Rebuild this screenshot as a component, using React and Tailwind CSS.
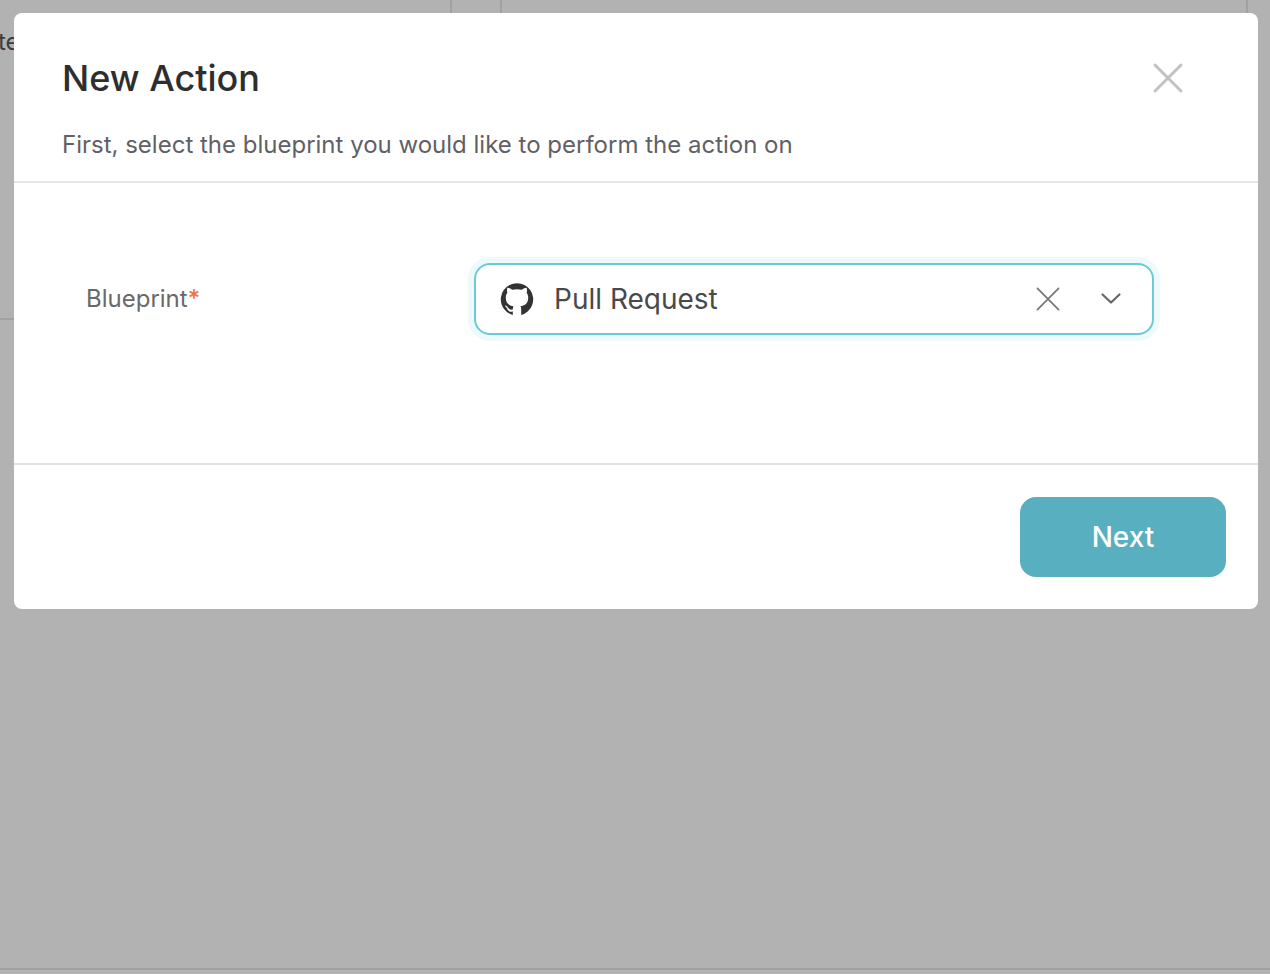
import { useState } from "react";

function GithubMark({ className }) {
  return (
    <svg viewBox="0 0 32 32" fill="currentColor" aria-hidden="true" className={className}>
      <path d="M11.8 32A16.2 16.2 0 1 1 20.2 32V26.4C20.2 24.9 20 24 19.4 23.3C24.4 22.6 27.2 20 27.2 14.8C27.2 12.7 26.6 11 25.6 9.8C26.2 8.2 26.1 6.4 25.6 4.7C24 4.7 22.4 5.6 20.8 6.8C17.8 6.1 14.2 6.1 11.2 6.8C9.6 5.6 8 4.7 6.4 4.7C5.9 6.4 5.8 8.2 6.4 9.8C5.4 11 4.8 12.7 4.8 14.8C4.8 20 7.6 22.6 12.6 23.3C12.1 24 11.9 25 11.8 26.6C9.8 27 8.4 26.5 7.3 25C6.4 23.6 5.4 22.6 4.1 22.5C3.7 22.7 3.9 23.1 4.5 23.5C5.4 24.2 5.9 25.2 6.4 26.2C7.4 28.2 9.2 29 11.8 28.6Z" />
    </svg>
  );
}

function Cross({ className, strokeWidth }) {
  return (
    <svg viewBox="0 0 32 32" fill="none" stroke="currentColor" strokeWidth={strokeWidth} strokeLinecap="round" aria-hidden="true" className={className}>
      <path d="M3 3 29 29M29 3 3 29" />
    </svg>
  );
}

function Backdrop() {
  return (
    <div className="col-start-1 row-start-1 flex min-h-screen flex-col pb-1">
      <div className="flex grow items-start gap-12 border-b-2 border-[#a0a0a7] pr-[22px]">
        <div className="h-80 w-[452px] shrink-0 border-r-2 border-b-2 border-[#a0a0a7] pt-6 text-2xl leading-9 text-[#3c3c3e]">
          <p className="-ml-0.5">te</p>
        </div>
        <div className="h-80 grow border-x-2 border-b-2 border-[#a0a0a7]" />
      </div>
    </div>
  );
}

export default function App() {
  const [blueprint, setBlueprint] = useState("pull-request");
  return (
    <div className="grid min-h-screen bg-[#b2b2b2] font-['Inter',sans-serif]">
      <Backdrop />
      <section role="dialog" aria-modal="true" aria-labelledby="dialog-title" className="z-10 col-start-1 row-start-1 mt-[13px] mr-3 ml-3.5 self-start rounded-lg bg-white">
        <header className="border-b-2 border-[#e5e5ea] pt-10 pr-[74px] pb-[18px] pl-12">
          <div className="flex items-center justify-between">
            <h1 id="dialog-title" className="text-4xl leading-[50px] font-medium text-[#2e2e2e]">New Action</h1>
            <button type="button" aria-label="Close" className="text-[#c1c1c1]">
              <Cross className="size-8" strokeWidth="3" />
            </button>
          </div>
          <p className="mt-6 text-2xl leading-9 text-[#5f6166]">First, select the blueprint you would like to perform the action on</p>
        </header>

        <form className="flex items-center justify-between border-b-2 border-[#e2e2e2] pt-20 pr-26 pb-32 pl-18">
          <label htmlFor="blueprint" className="text-2xl leading-9 text-[#696969]">
            Blueprint<span className="font-medium text-[#f2704e]">*</span>
          </label>
          <div className="flex h-18 w-[680px] items-center rounded-2xl border-2 border-[#6bcad8] pr-[29px] pl-[25px] ring-6 ring-[#edf9fb]">
            <GithubMark className="mr-[21px] size-8 shrink-0 overflow-visible text-[#333333]" />
            <select id="blueprint" value={blueprint} onChange={(e) => setBlueprint(e.target.value)} className="min-w-0 grow appearance-none bg-transparent text-[28px] leading-10 text-[#48494a] outline-none">
              <option value="pull-request">Pull Request</option>
              <option value="" />
            </select>
            <button type="button" aria-label="Clear blueprint" onClick={() => setBlueprint("")} className="mr-[38px] text-[#77787a]">
              <Cross className="size-[26px]" strokeWidth="2.2" />
            </button>
            <svg viewBox="0 0 24 24" fill="none" stroke="currentColor" strokeWidth="2.2" strokeLinecap="round" strokeLinejoin="round" aria-hidden="true" className="size-6 shrink-0 text-[#656668]">
              <path d="M3.5 7.5 12 15.5 20.5 7.5" />
            </svg>
          </div>
        </form>

        <footer className="flex justify-end p-8">
          <button type="button" className="h-20 w-[206px] rounded-2xl bg-[#58afbf] text-[28px] leading-10 font-medium text-white">Next</button>
        </footer>
      </section>
    </div>
  );
}
